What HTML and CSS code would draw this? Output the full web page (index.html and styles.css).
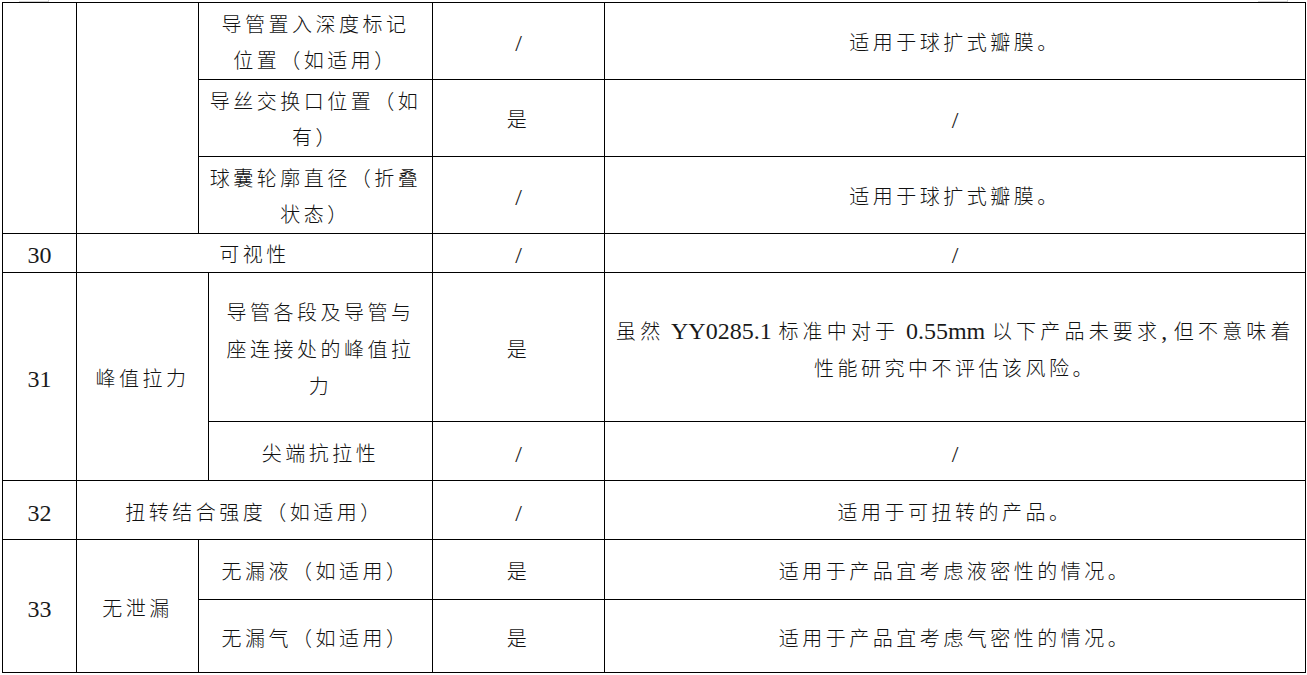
FILE: index.html
```html
<!DOCTYPE html>
<html lang="zh-CN">
<head>
<meta charset="utf-8">
<title>性能研究项目表</title>
<link rel="stylesheet" href="styles.css">
</head>
<body>
<div class="marks"><span class="mark"></span><span class="mark"></span></div>
<table class="spec">
  <colgroup>
    <col class="c-no">
    <col class="c-item">
    <col class="c-gap">
    <col class="c-sub">
    <col class="c-yes">
    <col class="c-note">
  </colgroup>
  <tbody>
    <tr class="r-a">
      <td rowspan="3"></td>
      <td rowspan="3"></td>
      <td colspan="2">导管置入深度标记<br>位置（如适用）</td>
      <td class="lat">/</td>
      <td>适用于球扩式瓣膜。</td>
    </tr>
    <tr class="r-b">
      <td colspan="2">导丝交换口位置（如<br>有）</td>
      <td>是</td>
      <td class="lat">/</td>
    </tr>
    <tr class="r-c">
      <td colspan="2">球囊轮廓直径（折叠<br>状态）</td>
      <td class="lat">/</td>
      <td>适用于球扩式瓣膜。</td>
    </tr>
    <tr class="r-d">
      <td class="lat">30</td>
      <td colspan="3">可视性</td>
      <td class="lat">/</td>
      <td class="lat">/</td>
    </tr>
    <tr class="r-e">
      <td class="lat" rowspan="2">31</td>
      <td colspan="2" rowspan="2">峰值拉力</td>
      <td>导管各段及导管与<br>座连接处的峰值拉<br>力</td>
      <td>是</td>
      <td class="long">
        <div class="just">虽然<span class="lat"> YY0285.1 </span>标准中对于<span class="lat"> 0.55mm </span>以下产品未要求<span class="lat">, </span>但不意味着</div>
        <div>性能研究中不评估该风险。</div>
      </td>
    </tr>
    <tr class="r-f">
      <td>尖端抗拉性</td>
      <td class="lat">/</td>
      <td class="lat">/</td>
    </tr>
    <tr class="r-g">
      <td class="lat">32</td>
      <td colspan="3">扭转结合强度（如适用）</td>
      <td class="lat">/</td>
      <td>适用于可扭转的产品。</td>
    </tr>
    <tr class="r-h">
      <td class="lat" rowspan="2">33</td>
      <td rowspan="2">无泄漏</td>
      <td colspan="2">无漏液（如适用）</td>
      <td>是</td>
      <td>适用于产品宜考虑液密性的情况。</td>
    </tr>
    <tr class="r-i">
      <td colspan="2">无漏气（如适用）</td>
      <td>是</td>
      <td>适用于产品宜考虑气密性的情况。</td>
    </tr>
  </tbody>
</table>
</body>
</html>
```
FILE: styles.css
```css
html, body {
  margin: 0;
  padding: 0;
  background: #fff;
}

body {
  width: 1307px;
  font-family: "Liberation Serif", "Noto Sans CJK SC", serif;
  color: #000;
}

.marks {
  display: flex;
  justify-content: space-between;
  height: 2px;
  padding: 0 19px;
}

.mark {
  width: 29px;
  height: 1px;
  border-bottom: 1px solid #d0d0d0;
  border-right: 1px solid #d0d0d0;
}

.spec {
  margin-left: 2px;
  border-collapse: collapse;
  table-layout: fixed;
  width: 1303px;
  font-size: 20px;
  font-weight: 300;
  line-height: 37px;
  letter-spacing: 3.5px;
  color: #111;
}

.c-no { width: 74px; }
.c-item { width: 122px; }
.c-gap { width: 10px; }
.c-sub { width: 224px; }
.c-yes { width: 172px; }
.c-note { width: 701px; }

.spec td {
  border: 1px solid #000;
  padding: 6px 8px 0;
  text-align: center;
  vertical-align: middle;
  white-space: nowrap;
  overflow: hidden;
}

.r-a, .r-b, .r-c { height: 77px; line-height: 36px; }
.r-a td, .r-b td, .r-c td { padding-top: 4px; }
.r-d { height: 39px; line-height: 31px; }
.r-e { height: 149px; }
.r-f { height: 59px; }
.r-g { height: 59px; }
.r-h { height: 60px; }
.r-i { height: 73px; }

.spec .lat {
  font-size: 24px;
  font-weight: 400;
  letter-spacing: 0;
  color: #1a1a1a;
}

.spec .r-d td {
  padding-top: 4px;
}

.spec td.lat {
  padding-left: 0;
  padding-right: 0;
}

.spec td.long {
  padding-left: 11px;
  padding-right: 11px;
}

.just {
  text-align: justify;
  text-align-last: justify;
}
```
